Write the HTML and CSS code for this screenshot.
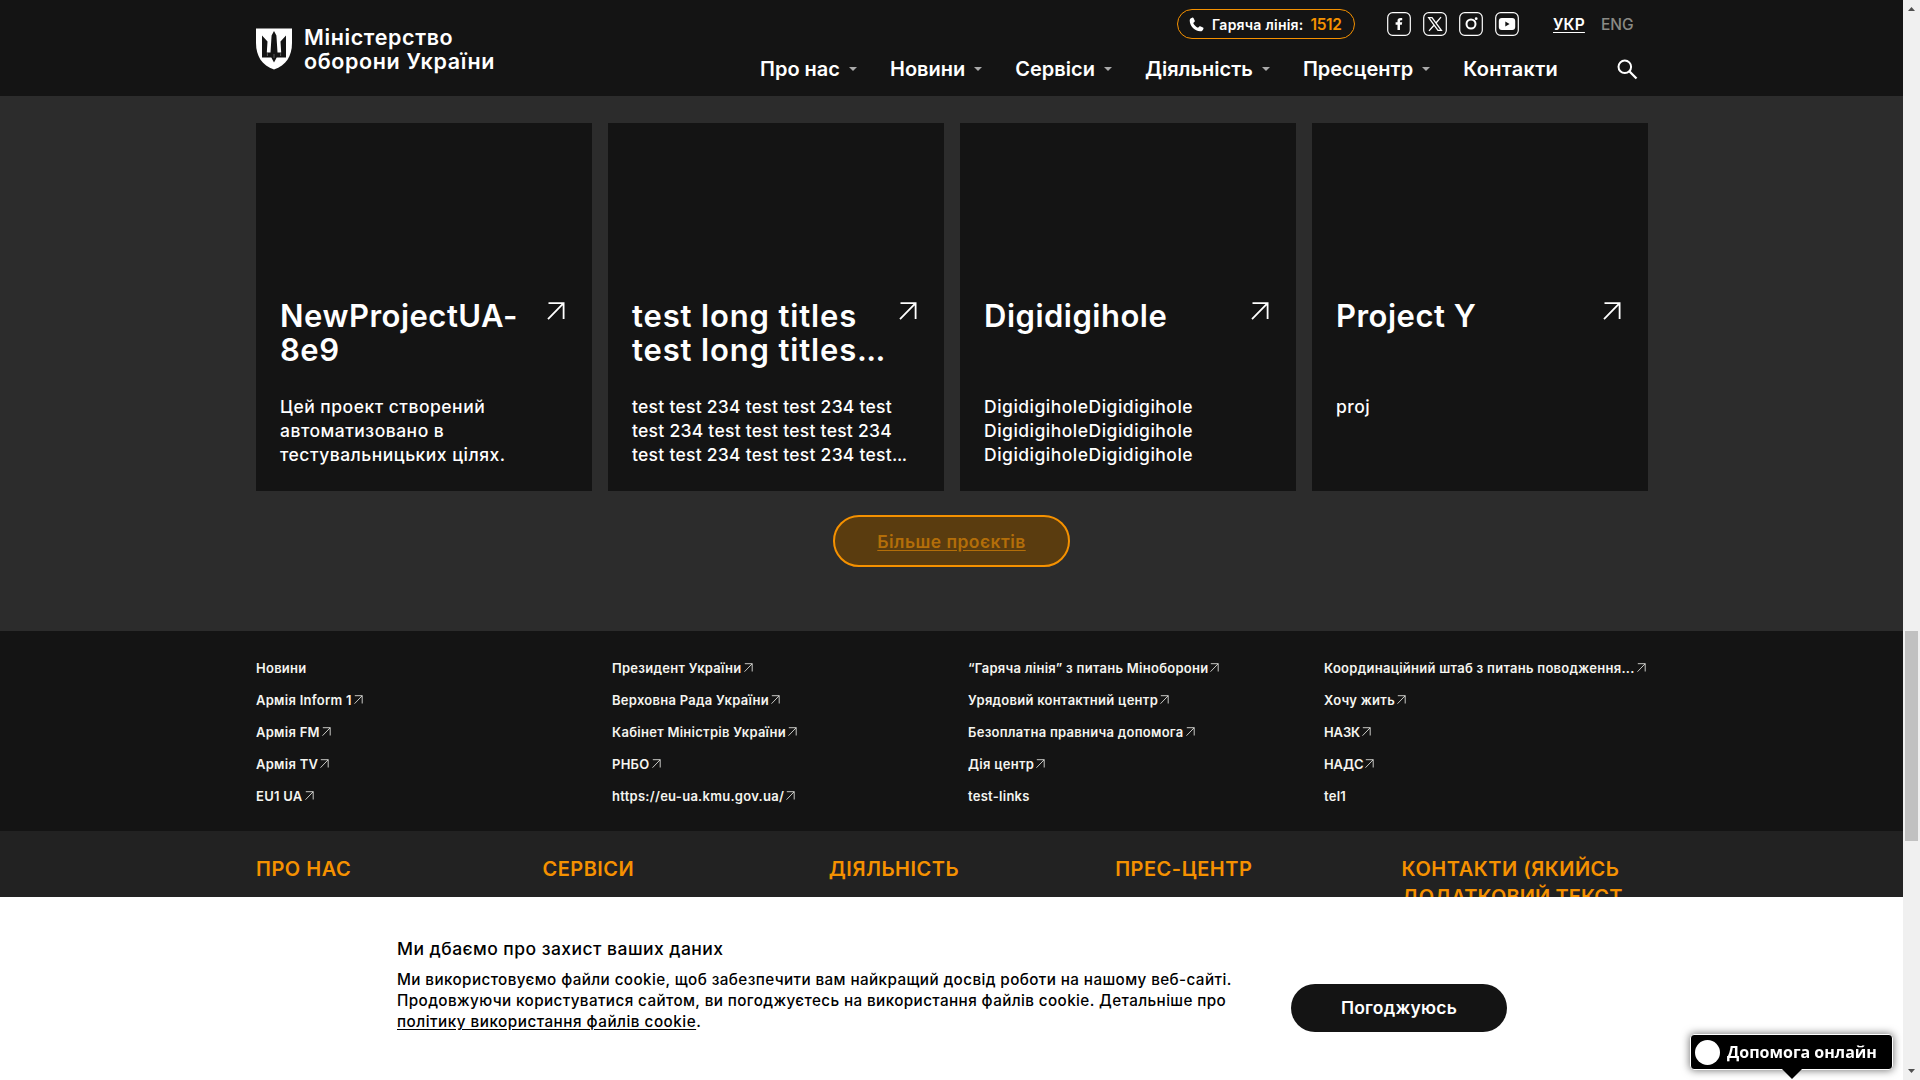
FILE: index.html
```html
<!DOCTYPE html>
<html lang="uk">
<head>
<meta charset="utf-8">
<title>Міністерство оборони України</title>
<link rel="stylesheet" href="styles.css">
</head>
<body>
<svg class="defs" aria-hidden="true">
  <symbol id="arrow" viewBox="0 0 18 18"><path d="M1.5 1.2H16.6V17M16.6 1.2L1 17.2" fill="none" stroke="currentColor" stroke-width="1.8"/></symbol>
  <symbol id="arrow-sm" viewBox="0 0 9 9"><path d="M.8 .7H8.2V8.5M8.2 .7L.5 8.7" fill="none" stroke="currentColor" stroke-width=".8"/></symbol>
</svg>
<div class="page">
  <header class="header">
    <div class="container header-inner">
      <a class="logo">
        <svg width="36" height="42" viewBox="0 0 36 42">
          <path fill="#fff" d="M0 .5H36V15C36 28 30 37.500 18 41.500C6 37.500 0 28 0 15Z"/>
          <path fill="#141414" d="M6 7.500L11.500 13.500L10.800 24.500H14.500L15.300 12L15.600 7.500L18 3L20.400 7.500L20.700 12L21.500 24.500H25.200L24.500 13.500L30 7.500V29.500H20.700L18 34.500L15.300 29.500H6Z"/>
          <path fill="none" stroke="#fff" stroke-width=".9" d="M11.400 25.200V28M18 26V30M24.600 25.200V28" opacity=".35"/>
        </svg>
        <span class="logo-text">Міністерство<br>оборони України</span>
      </a>
      <div class="header-main">
        <div class="topline">
          <a class="hotline">
            <svg width="15" height="15" viewBox="0 0 15 15"><path fill="#fff" d="M3.600 .5C2 .8 .6 2 .7 3.800C1 9.300 5.700 14 11.200 14.300C13 14.400 14.200 13 14.500 11.400C14.500 11 14.300 10.700 14 10.500L11.200 9.200C10.900 9.100 10.500 9.200 10.300 9.400L9 10.800C7 10 5 8 4.200 6L5.600 4.700C5.800 4.500 5.900 4.100 5.800 3.800L4.500 1C4.300 .7 4 .4 3.600 .5Z"/></svg>
            <span>Гаряча лінія:</span><b>1512</b>
          </a>
          <div class="social">
            <svg width="24" height="24" viewBox="0 0 24 24"><rect x=".7" y=".7" width="22.600" height="22.600" rx="5" fill="none" stroke="#fff" stroke-width="1.200"/><path fill="#fff" d="M10.500 18V12.800H8.600V10.300H10.500V8.700C10.500 6.800 11.600 5.900 13.400 5.900H15.200V8.200H14C13.300 8.200 13 8.500 13 9.100V10.300H15.200L14.800 12.800H13V18Z"/></svg>
            <svg width="24" height="24" viewBox="0 0 24 24"><rect x=".7" y=".7" width="22.600" height="22.600" rx="5" fill="none" stroke="#fff" stroke-width="1.200"/><path fill="none" stroke="#fff" stroke-width="1.300" d="M5.700 5.600H9L18.400 18.400H15ZM18 5.200L13 11M11 13.200L6 18.900"/></svg>
            <svg width="24" height="24" viewBox="0 0 24 24"><rect x=".7" y=".7" width="22.600" height="22.600" rx="5" fill="none" stroke="#fff" stroke-width="1.200"/><circle cx="12" cy="12" r="4.500" fill="none" stroke="#fff" stroke-width="2"/><circle cx="17.200" cy="6.700" r="1.400" fill="#fff"/></svg>
            <svg width="24" height="24" viewBox="0 0 24 24"><rect x=".7" y=".7" width="22.600" height="22.600" rx="5" fill="none" stroke="#fff" stroke-width="1.200"/><rect x="3.800" y="6" width="16.400" height="12" rx="3" fill="#fff"/><path fill="#141414" d="M10.300 9.500V14.500L14.600 12Z"/></svg>
          </div>
          <div class="lang"><a class="lang-active">УКР</a><a class="lang-other">ENG</a></div>
        </div>
        <nav class="nav">
          <a class="has-menu">Про нас</a>
          <a class="has-menu">Новини</a>
          <a class="has-menu">Сервіси</a>
          <a class="has-menu">Діяльність</a>
          <a class="has-menu">Пресцентр</a>
          <a class="nav-last">Контакти</a>
          <svg class="search" width="21" height="21" viewBox="0 0 21 21"><circle cx="7.800" cy="7.800" r="6.300" fill="none" stroke="#fff" stroke-width="2"/><path d="M12.300 12.300L19.500 19.500" stroke="#fff" stroke-width="2.300"/></svg>
        </nav>
      </div>
    </div>
  </header>

  <section class="projects">
    <div class="container cards">
      <article class="card">
        <div class="card-head"><h2>NewProjectUA-<br>8e9</h2><svg><use href="#arrow"/></svg></div>
        <p>Цей проект створений<br>автоматизовано в<br>тестувальницьких цілях.</p>
      </article>
      <article class="card">
        <div class="card-head"><h2 class="long">test long titles<br>test long titles<span class="dots">...</span></h2><svg><use href="#arrow"/></svg></div>
        <p class="tight">test test 234 test test 234 test<br>test 234 test test test test 234<br>test test 234 test test 234 test<span class="dots">...</span></p>
      </article>
      <article class="card">
        <div class="card-head"><h2>Digidigihole</h2><svg><use href="#arrow"/></svg></div>
        <p>DigidigiholeDigidigihole<br>DigidigiholeDigidigihole<br>DigidigiholeDigidigihole</p>
      </article>
      <article class="card">
        <div class="card-head"><h2>Project Y</h2><svg><use href="#arrow"/></svg></div>
        <p>proj</p>
      </article>
    </div>
    <a class="more">Більше проєктів</a>
  </section>

  <section class="links">
    <div class="container links-grid">
      <ul>
        <li>Новини</li>
        <li>Армія Inform 1<svg><use href="#arrow-sm"/></svg></li>
        <li>Армія FM<svg><use href="#arrow-sm"/></svg></li>
        <li>Армія TV<svg><use href="#arrow-sm"/></svg></li>
        <li>EU1 UA<svg><use href="#arrow-sm"/></svg></li>
      </ul>
      <ul>
        <li>Президент України<svg><use href="#arrow-sm"/></svg></li>
        <li>Верховна Рада України<svg><use href="#arrow-sm"/></svg></li>
        <li>Кабінет Міністрів України<svg><use href="#arrow-sm"/></svg></li>
        <li>РНБО<svg><use href="#arrow-sm"/></svg></li>
        <li>https://eu-ua.kmu.gov.ua/<svg><use href="#arrow-sm"/></svg></li>
      </ul>
      <ul>
        <li>“Гаряча лінія” з питань Міноборони<svg><use href="#arrow-sm"/></svg></li>
        <li>Урядовий контактний центр<svg><use href="#arrow-sm"/></svg></li>
        <li>Безоплатна правнича допомога<svg><use href="#arrow-sm"/></svg></li>
        <li>Дія центр<svg><use href="#arrow-sm"/></svg></li>
        <li>test-links</li>
      </ul>
      <ul>
        <li>Координаційний штаб з питань поводження...<svg><use href="#arrow-sm"/></svg></li>
        <li>Хочу жить<svg><use href="#arrow-sm"/></svg></li>
        <li class="caps">НАЗК<svg><use href="#arrow-sm"/></svg></li>
        <li class="caps">НАДС<svg><use href="#arrow-sm"/></svg></li>
        <li>tel1</li>
      </ul>
    </div>
  </section>

  <footer class="footer">
    <div class="container footer-grid">
      <h3>ПРО НАС</h3>
      <h3>СЕРВІСИ</h3>
      <h3>ДІЯЛЬНІСТЬ</h3>
      <h3>ПРЕС-ЦЕНТР</h3>
      <h3>КОНТАКТИ (ЯКИЙСЬ<br><span class="tight-line">ДОДАТКОВИЙ ТЕКСТ</span></h3>
    </div>
  </footer>
</div>

<div class="cookie">
  <div class="cookie-text">
    <h4>Ми дбаємо про захист ваших даних</h4>
    <p>Ми використовуємо файли cookie, щоб забезпечити вам найкращий досвід роботи на нашому веб-сайті.<br>Продовжуючи користуватися сайтом, ви погоджуєтесь на використання файлів cookie. Детальніше про<br><u>політику використання файлів cookie</u>.</p>
  </div>
  <button class="agree">Погоджуюсь</button>
</div>

<div class="chat"><span class="chat-dot"></span>Допомога онлайн</div>

<div class="scrollbar">
  <svg class="sb-arrow" viewBox="0 0 7 4"><path d="M0 4L3.500 0L7 4Z" fill="#505050"/></svg>
  <div class="sb-thumb"></div>
  <svg class="sb-arrow" viewBox="0 0 7 4"><path d="M0 0H7L3.500 4Z" fill="#505050"/></svg>
</div>
</body>
</html>
```
FILE: styles.css
```css
* { box-sizing: border-box; margin: 0; padding: 0; }
body {
  height: 1080px;
  overflow: hidden;
  background: #222;
  color: #fff;
  font-family: Inter, "Liberation Sans", sans-serif;
  white-space: nowrap;
}
.defs { display: none; }
.page { width: 1903px; height: 1080px; overflow: hidden; }
.container { width: 1392px; margin-left: 256px; }

.header { height: 96px; background: #141414; }
.header-inner { display: flex; justify-content: space-between; height: 96px; }
.logo { display: flex; align-items: center; gap: 12px; padding-top: 1px; }
.logo-text { padding-top: 1px; font-size: 21.5px; line-height: 24px; font-weight: 600; letter-spacing: .62px; }
.header-main { width: 888px; padding-top: 9px; }
.topline { display: flex; align-items: center; height: 30px; padding-left: 417px; }
.hotline {
  display: flex; align-items: center;
  width: 178px; height: 30px; padding-left: 11px;
  border: 1px solid #f59100; border-radius: 15px;
  font-size: 14px; font-weight: 600; letter-spacing: .24px;
}
.hotline span { margin-left: 8px; }
.hotline b { margin-left: 7px; color: #f59100; font-size: 15.5px; font-weight: 600; letter-spacing: -.4px; }
.social { display: flex; gap: 12px; margin-left: 32px; }
.lang { display: flex; gap: 16px; margin-left: 34px; padding-top: 1px; font-size: 15.5px; line-height: 24px; }
.lang-active { font-weight: 600; letter-spacing: .2px; text-decoration: underline; text-underline-offset: 2px; }
.lang-other { color: #8a8a84; font-weight: 500; }
.nav { display: flex; gap: 33px; margin-top: 18px; font-size: 20px; line-height: 24px; font-weight: 600; letter-spacing: 0; }
.has-menu { display: flex; align-items: center; }
.has-menu::after {
  content: ""; margin-left: 9px;
  border: 4px solid transparent; border-top-color: #aaa; border-bottom: 0;
}
.nav-last { letter-spacing: .3px; }
.search { margin: 2px 0 0 26px; }

.projects { height: 535px; padding-top: 27px; background: #2c2c2c; }
.cards { display: grid; grid-template-columns: repeat(4, 1fr); gap: 16px; }
.card {
  display: flex; flex-direction: column; justify-content: flex-end; gap: 28px;
  height: 368px; padding: 24px; background: #141414;
}
.card-head { display: flex; justify-content: space-between; height: 68px; }
.card h2 { width: 252px; font-size: 31px; line-height: 34px; font-weight: 600; letter-spacing: .5px; }
.card .long { letter-spacing: .85px; }
.long .dots { letter-spacing: -.6px; }
.card-head svg { width: 18px; height: 18px; margin: 3px 3px 0 0; }
.card p { height: 72px; font-size: 17.5px; line-height: 24px; font-weight: 500; letter-spacing: .5px; }
.card .tight { letter-spacing: .26px; }
.tight .dots { letter-spacing: -.4px; }
.more {
  display: flex; align-items: center; justify-content: center;
  width: 237px; height: 52px; margin: 24px 0 0 833px;
  border: 2px solid #f59100; border-radius: 26px;
  background: #5a3c0f; color: #b36e09;
  font-size: 17.5px; font-weight: 600; letter-spacing: .45px;
  text-decoration: underline; text-underline-offset: 2px;
}

.links { height: 200px; padding-top: 29px; background: #141414; color: #f5f5f0; }
.links-grid { display: grid; grid-template-columns: repeat(4, 1fr); gap: 32px; }
.links ul { display: flex; flex-direction: column; gap: 16px; list-style: none; }
.links li { display: flex; font-size: 13px; line-height: 16px; font-weight: 600; letter-spacing: .27px; }
.links .caps { letter-spacing: -.1px; }
.links li svg { flex: none; width: 9px; height: 9px; margin: 3px 0 0 2px; }

.footer { padding-top: 24px; background: #222; }
.footer-grid { display: grid; grid-template-columns: repeat(5, 1fr); gap: 40px; }
.footer h3 { color: #f59100; font-size: 20px; line-height: 28px; font-weight: 600; letter-spacing: .5px; }
.tight-line { letter-spacing: .1px; }

.cookie {
  position: fixed; left: 0; bottom: 0;
  display: flex; justify-content: space-between; align-items: flex-start;
  width: 1903px; height: 183px; padding: 40px 396px 0 397px;
  background: #fff; color: #000;
}
.cookie h4 { font-size: 17.5px; line-height: 24px; font-weight: 500; letter-spacing: .46px; }
.cookie p { margin-top: 8px; font-size: 15.25px; line-height: 21px; font-weight: 500; letter-spacing: .39px; }
.cookie u { letter-spacing: .5px; text-underline-offset: 2px; }
.agree {
  width: 216px; height: 48px; margin-top: 47px; padding-bottom: 1px;
  border: 0; border-radius: 24px; background: #141414; color: #fff;
  font: 600 17.5px Inter, sans-serif; letter-spacing: .25px;
}

.chat {
  position: fixed; left: 1690px; top: 1034px;
  display: flex; align-items: center; gap: 7px;
  width: 203px; height: 36px; padding-left: 4px;
  border: 1px solid #fff; border-radius: 4px;
  background: #000; box-shadow: 0 0 8px rgba(0, 0, 0, .6);
  font: 700 16px "Open Sans", "Noto Sans", sans-serif;
}
.chat::after {
  content: ""; position: absolute; left: 91px; top: 34px;
  border: 10px solid transparent; border-top-color: #000; border-bottom: 0;
}
.chat-dot { width: 25px; height: 25px; border-radius: 50%; background: #fff; }

.scrollbar {
  position: fixed; right: 0; top: 0;
  display: flex; flex-direction: column; align-items: center; justify-content: space-between;
  width: 17px; height: 1080px; padding: 7px 0; background: #f0f0f0;
}
.sb-arrow { width: 7px; height: 4px; }
.sb-thumb { width: 13px; height: 210px; margin-top: 392px; background: #c1c1c1; }
```
